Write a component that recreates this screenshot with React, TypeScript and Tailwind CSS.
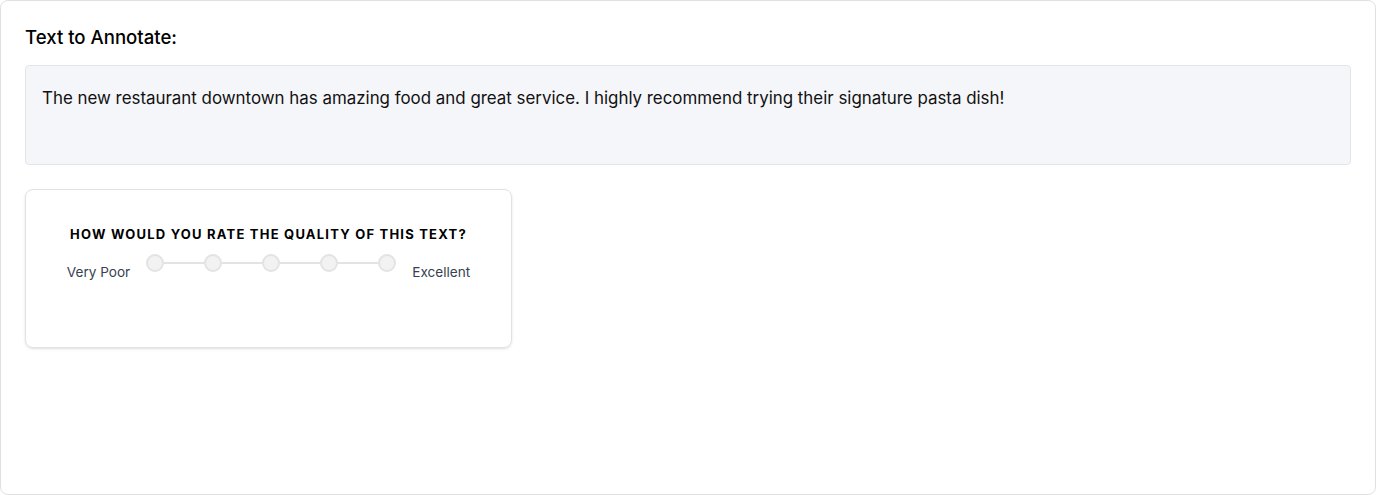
import React from "react";

const Scale = () => {
  const points = [1, 2, 3, 4, 5];
  return (
    <div className="flex items-center">
      {points.map((p, i) => (
        <React.Fragment key={p}>
          <div className="w-[18px] h-[18px] rounded-full bg-[#f2f2f2] border-2 border-[#e3e3e3] shrink-0" />
          {i < points.length - 1 && <div className="w-[40px] h-[2px] bg-[#e3e3e3]" />}
        </React.Fragment>
      ))}
    </div>
  );
};

const App = () => {
  return (
    <div className="w-[1376px] h-[495px] bg-white font-['Inter',sans-serif] text-black">
      <div className="h-full border border-[#e0e0e0] rounded-lg p-6">
        <h2 className="text-[18.6px] leading-6 font-medium mb-4">Text to Annotate:</h2>
        <div className="min-h-[100px] bg-[#f5f6fa] border border-[#e2e4ea] rounded px-4 pt-[19px] pb-4 text-[16.9px] leading-[27px] text-[#111]">
          The new restaurant downtown has amazing food and great service. I highly recommend trying their signature pasta dish!
        </div>
        <div className="mt-6 w-[487px] h-[159px] border border-[#e2e2e2] rounded-lg shadow-sm pt-[34px] flex flex-col items-center">
          <div className="text-[13px] leading-5 font-bold tracking-[0.093em] uppercase">
            How would you rate the quality of this text?
          </div>
          <div className="mt-[10px] flex items-start gap-4">
            <span className="mt-2 text-[13.6px] leading-5 text-[#374151]">Very Poor</span>
            <Scale />
            <span className="mt-2 text-[13.6px] leading-5 text-[#374151]">Excellent</span>
          </div>
        </div>
      </div>
    </div>
  );
};

export default App;
